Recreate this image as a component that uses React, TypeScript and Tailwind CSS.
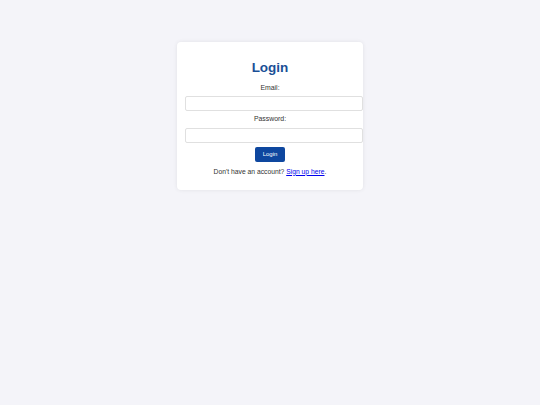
import React from "react";

export default function App() {
  return (
    <div
      className="min-h-[405px] w-full bg-[#f4f4f9] pt-[42px] text-[#333]"
      style={{ fontFamily: '"Liberation Sans", Arial, sans-serif' }}
    >
      <div className="mx-auto w-[186px] rounded-[4px] bg-white p-[8.4px] text-center shadow-[0_0_4px_rgba(0,0,0,0.08)]">
        <h1 className="mt-[9.6px] mb-[8.4px] text-[13.5px] leading-[15.5px] font-bold text-[#1a4f96]">
          Login
        </h1>
        <form onSubmit={(e) => e.preventDefault()}>
          <label className="mb-[4.3px] block text-[6.9px] leading-[7.8px]">
            Email:
          </label>
          <input
            type="email"
            className="mb-[4.2px] block h-[15px] w-[178px] rounded-[2px] border border-[#e0e0e0] bg-white outline-none"
          />
          <label className="mb-[5px] block text-[6.9px] leading-[7.8px]">
            Password:
          </label>
          <input
            type="password"
            className="mb-[3.6px] block h-[15px] w-[178px] rounded-[2px] border border-[#e0e0e0] bg-white outline-none"
          />
          <button
            type="submit"
            className="mx-auto block h-[15px] w-[30px] rounded-[2px] bg-[#0e479f] text-[6px] leading-[15px] text-white"
          >
            Login
          </button>
        </form>
        <p className="mt-[6px] mb-[6.5px] text-[6.75px] leading-[7.8px]">
          Don't have an account?{" "}
          <a href="#" className="text-[#0000ee] underline">
            Sign up here
          </a>
          .
        </p>
      </div>
    </div>
  );
}
